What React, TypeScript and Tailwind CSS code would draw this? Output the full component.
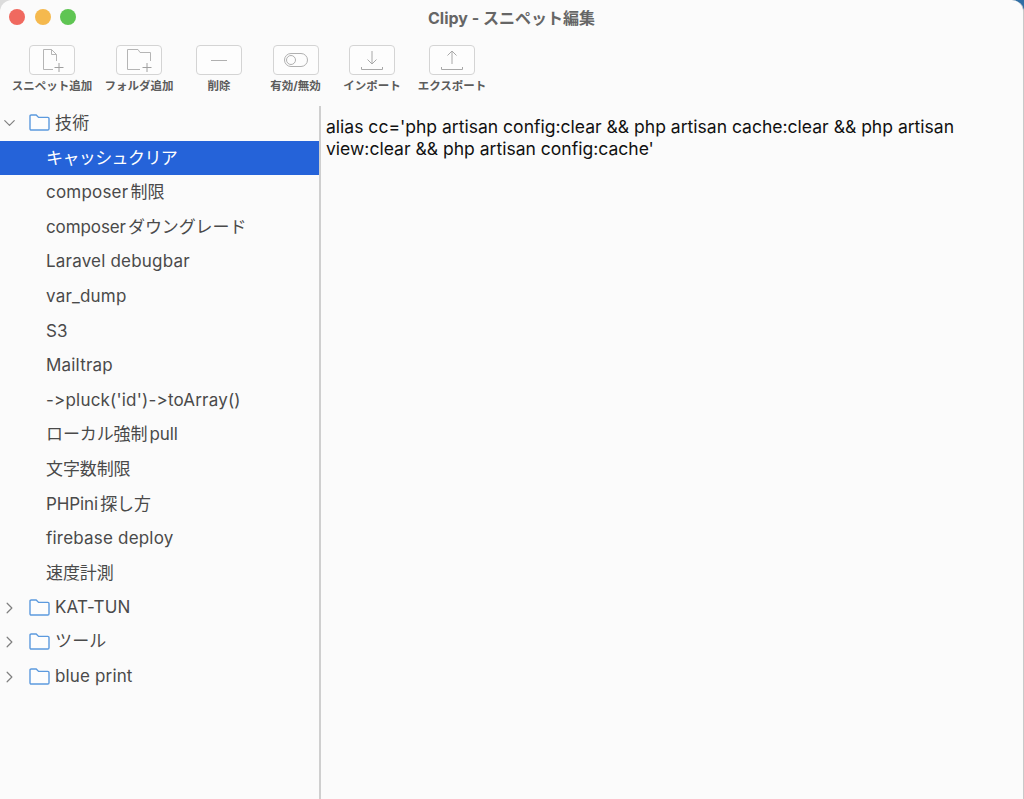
import { ChevronDown, ChevronRight } from 'lucide-react'

const jp = { fontFamily: '"Inter", "Noto Sans CJK JP", sans-serif' }

function FileAddIcon() {
  return (
    <svg width="24" height="24" viewBox="0 0 24 24" fill="none" stroke="#b5b5b5" strokeWidth="1">
      <path d="M13 21.5H3.5V1.5H11.5L16.5 6.5V13" />
      <path d="M11.5 1.5V6.5H16.5" />
      <path d="M19 15V24M14.5 19.5H23.5" stroke="#a0a0a0" />
    </svg>
  )
}

function FolderAddIcon() {
  return (
    <svg width="26" height="24" viewBox="0 0 26 24" fill="none" stroke="#b5b5b5" strokeWidth="1">
      <path d="M14 21.5H1.5V1.5H12L14 4.5H24.5V13" />
      <path d="M21 15V24M16.5 19.5H25.5" stroke="#a0a0a0" />
    </svg>
  )
}

function MinusIcon() {
  return (
    <svg width="18" height="18" viewBox="0 0 18 18" fill="none" stroke="#b0b0b0" strokeWidth="1">
      <path d="M1 9.5H17" />
    </svg>
  )
}

function ToggleIcon() {
  return (
    <svg width="26" height="16" viewBox="0 0 26 16" fill="none" stroke="#b0b0b0" strokeWidth="1">
      <rect x="1.5" y="1.5" width="23" height="13" rx="6.5" />
      <circle cx="8" cy="8" r="4.5" />
    </svg>
  )
}

function ImportIcon() {
  return (
    <svg width="24" height="24" viewBox="0 0 24 24" fill="none" stroke="#a8a8a8" strokeWidth="1">
      <path d="M12 3V16M7.5 11.5L12 16L16.5 11.5" />
      <path d="M1.5 19V21.5H22.5V19" />
    </svg>
  )
}

function ExportIcon() {
  return (
    <svg width="24" height="24" viewBox="0 0 24 24" fill="none" stroke="#a8a8a8" strokeWidth="1">
      <path d="M12 16V3M7.5 7.5L12 3L16.5 7.5" />
      <path d="M1.5 19V21.5H22.5V19" />
    </svg>
  )
}

function FolderIcon() {
  return (
    <svg width="21" height="18" viewBox="0 0 21 18" fill="#fdfdfd" stroke="#5c9ade" strokeWidth="1.4">
      <path d="M1 14.8V2.2C1 1.5 1.5 1 2.2 1H7.2L9.6 3.4H18.8C19.5 3.4 20 3.9 20 4.6V14.8C20 15.5 19.5 16 18.8 16H2.2C1.5 16 1 15.5 1 14.8Z" />
    </svg>
  )
}

function FolderRow({ name, open }: { name: string; open?: boolean }) {
  return (
    <div className="flex h-[34.6px] items-center text-[17px] tracking-[0.15px] text-[#4a4a4a]">
      <div className="flex w-[29px] justify-center pr-[10px] text-[#808080]">
        {open ? <ChevronDown size={20} strokeWidth={1.5} /> : <ChevronRight size={20} strokeWidth={1.5} />}
      </div>
      <FolderIcon />
      <span className="ml-[5px]">{name}</span>
    </div>
  )
}

const tools = [
  { label: 'スニペット追加', width: 'w-[82px]', icon: <FileAddIcon /> },
  { label: 'フォルダ追加', width: 'w-[92px]', icon: <FolderAddIcon /> },
  { label: '削除', width: 'w-[68px]', icon: <MinusIcon /> },
  { label: '有効/無効', width: 'w-[85px]', icon: <ToggleIcon /> },
  { label: 'インポート', width: 'w-[68px]', icon: <ImportIcon /> },
  { label: 'エクスポート', width: 'w-[92px]', icon: <ExportIcon /> },
]

// cjk rows run a little narrower in the reference than the latin ones
const snippets = [
  { name: 'composer制限', cjk: false },
  { name: 'composerダウングレード', cjk: true },
  { name: 'Laravel debugbar', cjk: false },
  { name: 'var_dump', cjk: false },
  { name: 'S3', cjk: false },
  { name: 'Mailtrap', cjk: false },
  { name: "->pluck('id')->toArray()", cjk: false },
  { name: 'ローカル強制pull', cjk: true },
  { name: '文字数制限', cjk: true },
  { name: 'PHPini探し方', cjk: true },
  { name: 'firebase deploy', cjk: false },
  { name: '速度計測', cjk: true },
]

export default function App() {
  return (
    <div
      className="h-[799px] w-[1024px] overflow-hidden bg-[linear-gradient(90deg,#dcdcdc_50%,#2f6ea5_50%)] [font-feature-settings:'calt'_0] [text-autospace:normal]"
      style={jp}
    >
      <div className="flex h-full flex-col rounded-t-[12px] border-r border-[#c9c9c9] bg-[#fbfbfb]">
        <div className="relative flex h-[34px] shrink-0 items-center justify-center pt-[1px] text-[16px] font-bold text-[#666666]">
          <div className="absolute left-[9px] top-[9px] flex gap-[9.6px]">
            <div className="h-[16px] w-[16px] rounded-full bg-[#f0695f]" />
            <div className="h-[16px] w-[16px] rounded-full bg-[#f5b94e]" />
            <div className="h-[16px] w-[16px] rounded-full bg-[#5fc553]" />
          </div>
          Clipy - スニペット編集
        </div>

        <div className="flex h-[72px] shrink-0 pl-[11px] pt-[11px]">
          {tools.map((t) => (
            <div key={t.label} className={`flex flex-col items-center ${t.width}`}>
              <div className="flex h-[30px] w-[46px] items-center justify-center rounded-[4px] border border-[#d4d4d4] bg-[#fdfdfd]">
                {t.icon}
              </div>
              <div className="mt-[3px] whitespace-nowrap text-[11.5px] font-bold leading-[16px] text-[#5c5c5c]">
                {t.label}
              </div>
            </div>
          ))}
        </div>

        <div className="flex min-h-0 flex-1">
          <div className="w-[321px] shrink-0 border-r-2 border-[#cfcfcf]">
            <FolderRow name="技術" open />
            <div className="flex h-[34.6px] items-center bg-[#2563d9] pl-[46px] pt-[1px] text-[17px] tracking-[-0.6px] text-white">
              キャッシュクリア
            </div>
            {snippets.map((s) => (
              <div
                key={s.name}
                className={`flex h-[34.6px] items-center pl-[46px] pt-[1px] text-[17px] text-[#4a4a4a] ${
                  s.cjk ? 'tracking-[-0.1px]' : 'tracking-[0.2px]'
                }`}
              >
                {s.name}
              </div>
            ))}
            <FolderRow name="KAT-TUN" />
            <FolderRow name="ツール" />
            <FolderRow name="blue print" />
          </div>
          <div className="flex-1 pl-[5px] pt-[10px] text-[17.55px] leading-[22px] text-[#111111]">
            alias cc='php artisan config:clear &amp;&amp; php artisan cache:clear &amp;&amp; php artisan
            <br />
            view:clear &amp;&amp; php artisan config:cache'
          </div>
        </div>
      </div>
    </div>
  )
}
